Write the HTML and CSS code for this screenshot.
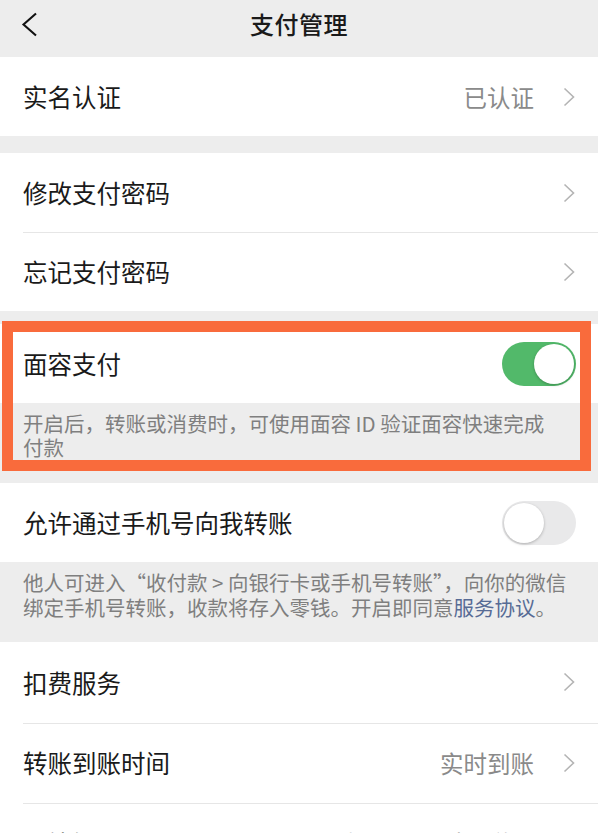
FILE: index.html
```html
<!DOCTYPE html>
<html lang="zh-CN">
<head>
    <meta charset="UTF-8">
    <meta name="viewport" content="width=device-width, initial-scale=1.0">
    <title>支付管理</title>
    <link rel="stylesheet" href="styles.css">
</head>
<body>

    <div class="nav">
        <svg class="back" width="18" height="26" viewBox="0 0 18 26">
            <polyline points="15,1.5 2.5,12.5 15,23.5" fill="none" stroke="#111" stroke-width="2.1"/>
        </svg>
        <div class="title">支付管理</div>
    </div>

    <div class="group">
        <div class="cell">
            <span class="label">实名认证</span>
            <span class="value">已认证</span>
            <svg class="arrow" width="12" height="20" viewBox="0 0 12 20"><polyline points="1.5,1.5 10.5,10 1.5,18.5"/></svg>
        </div>
    </div>

    <div class="group">
        <div class="cell">
            <span class="label">修改支付密码</span>
            <svg class="arrow" width="12" height="20" viewBox="0 0 12 20"><polyline points="1.5,1.5 10.5,10 1.5,18.5"/></svg>
        </div>
        <div class="cell">
            <span class="label">忘记支付密码</span>
            <svg class="arrow" width="12" height="20" viewBox="0 0 12 20"><polyline points="1.5,1.5 10.5,10 1.5,18.5"/></svg>
        </div>
    </div>

    <div class="group highlight">
        <div class="cell">
            <span class="label">面容支付</span>
            <span class="switch on"></span>
        </div>
        <div class="tips tips-face">开启后，转账或消费时，可使用面容 ID 验证面容快速完成付款</div>
        <div class="mark"></div>
    </div>

    <div class="group">
        <div class="cell">
            <span class="label">允许通过手机号向我转账</span>
            <span class="switch"></span>
        </div>
        <div class="tips tips-phone">他人可进入“收付款 &gt; 向银行卡或手机号转账”，向你的微信绑定手机号转账，收款将存入零钱。开启即同意<a href="#">服务协议</a>。</div>
    </div>

    <div class="group tall">
        <div class="cell">
            <span class="label">扣费服务</span>
            <svg class="arrow" width="12" height="20" viewBox="0 0 12 20"><polyline points="1.5,1.5 10.5,10 1.5,18.5"/></svg>
        </div>
        <div class="cell">
            <span class="label">转账到账时间</span>
            <span class="value">实时到账</span>
            <svg class="arrow" width="12" height="20" viewBox="0 0 12 20"><polyline points="1.5,1.5 10.5,10 1.5,18.5"/></svg>
        </div>
        <div class="cell">
            <span class="label">零钱提现到账</span>
            <span class="value">提现到账时间说明</span>
            <svg class="arrow" width="12" height="20" viewBox="0 0 12 20"><polyline points="1.5,1.5 10.5,10 1.5,18.5"/></svg>
        </div>
    </div>

</body>
</html>
```

FILE: styles.css
```css
body {
    margin: 0;
    background-color: #ededed;
    font-family: "Noto Sans CJK SC", "Noto Sans", sans-serif;
    color: #1a1a1a;
    width: 598px;
    overflow: hidden;
}

.nav {
    height: 57px;
    display: flex;
    align-items: center;
    justify-content: center;
    position: relative;
}

.nav .back {
    position: absolute;
    left: 21px;
    top: 12px;
}

.title {
    font-size: 24px;
    font-weight: 500;
    line-height: 1;
    letter-spacing: 0.5px;
    padding-bottom: 9px;
}

.group {
    background-color: #fff;
    margin-bottom: 17px;
}

.cell {
    height: 79px;
    display: flex;
    align-items: center;
    padding: 0 23px;
    position: relative;
}

.tall .cell {
    height: 80.5px;
}

.cell + .cell::before {
    content: "";
    position: absolute;
    left: 23px;
    right: 0;
    top: 0;
    height: 1px;
    background-color: #e6e6e6;
}

.label {
    font-size: 24.5px;
    flex: 1;
}

.value {
    font-size: 23.5px;
    color: #8a8a8a;
}

.arrow {
    margin-left: 29px;
    fill: none;
    stroke: #b4b4b4;
    stroke-width: 1.6;
}

.switch {
    width: 74px;
    height: 44px;
    border-radius: 22px;
    background-color: #e9e9ea;
    position: relative;
    margin-right: -1px;
}

.switch::after {
    content: "";
    position: absolute;
    left: 2px;
    top: 2px;
    width: 40px;
    height: 40px;
    border-radius: 50%;
    background-color: #fff;
    box-shadow: 0 1px 3px rgba(0, 0, 0, 0.25);
}

.switch.on {
    background-color: #52b96a;
}

.switch.on::after {
    left: 32px;
}

.tips {
    background-color: #ededed;
    color: #7f7f7f;
    font-size: 20.5px;
    line-height: 24px;
}

.tips-face {
    padding: 8px 44px 10px 23px;
}

.tips-phone {
    line-height: 25px;
    padding: 8px 18px 22px 23px;
    margin-bottom: -17px;
}

.tips a {
    color: #576b95;
    text-decoration: none;
}

.highlight {
    position: relative;
    margin-top: -4px;
    margin-bottom: 14px;
}

.mark {
    position: absolute;
    left: 2px;
    right: 7px;
    top: -3px;
    bottom: -2px;
    border: 11px solid #f96b3c;
    pointer-events: none;
}
```
